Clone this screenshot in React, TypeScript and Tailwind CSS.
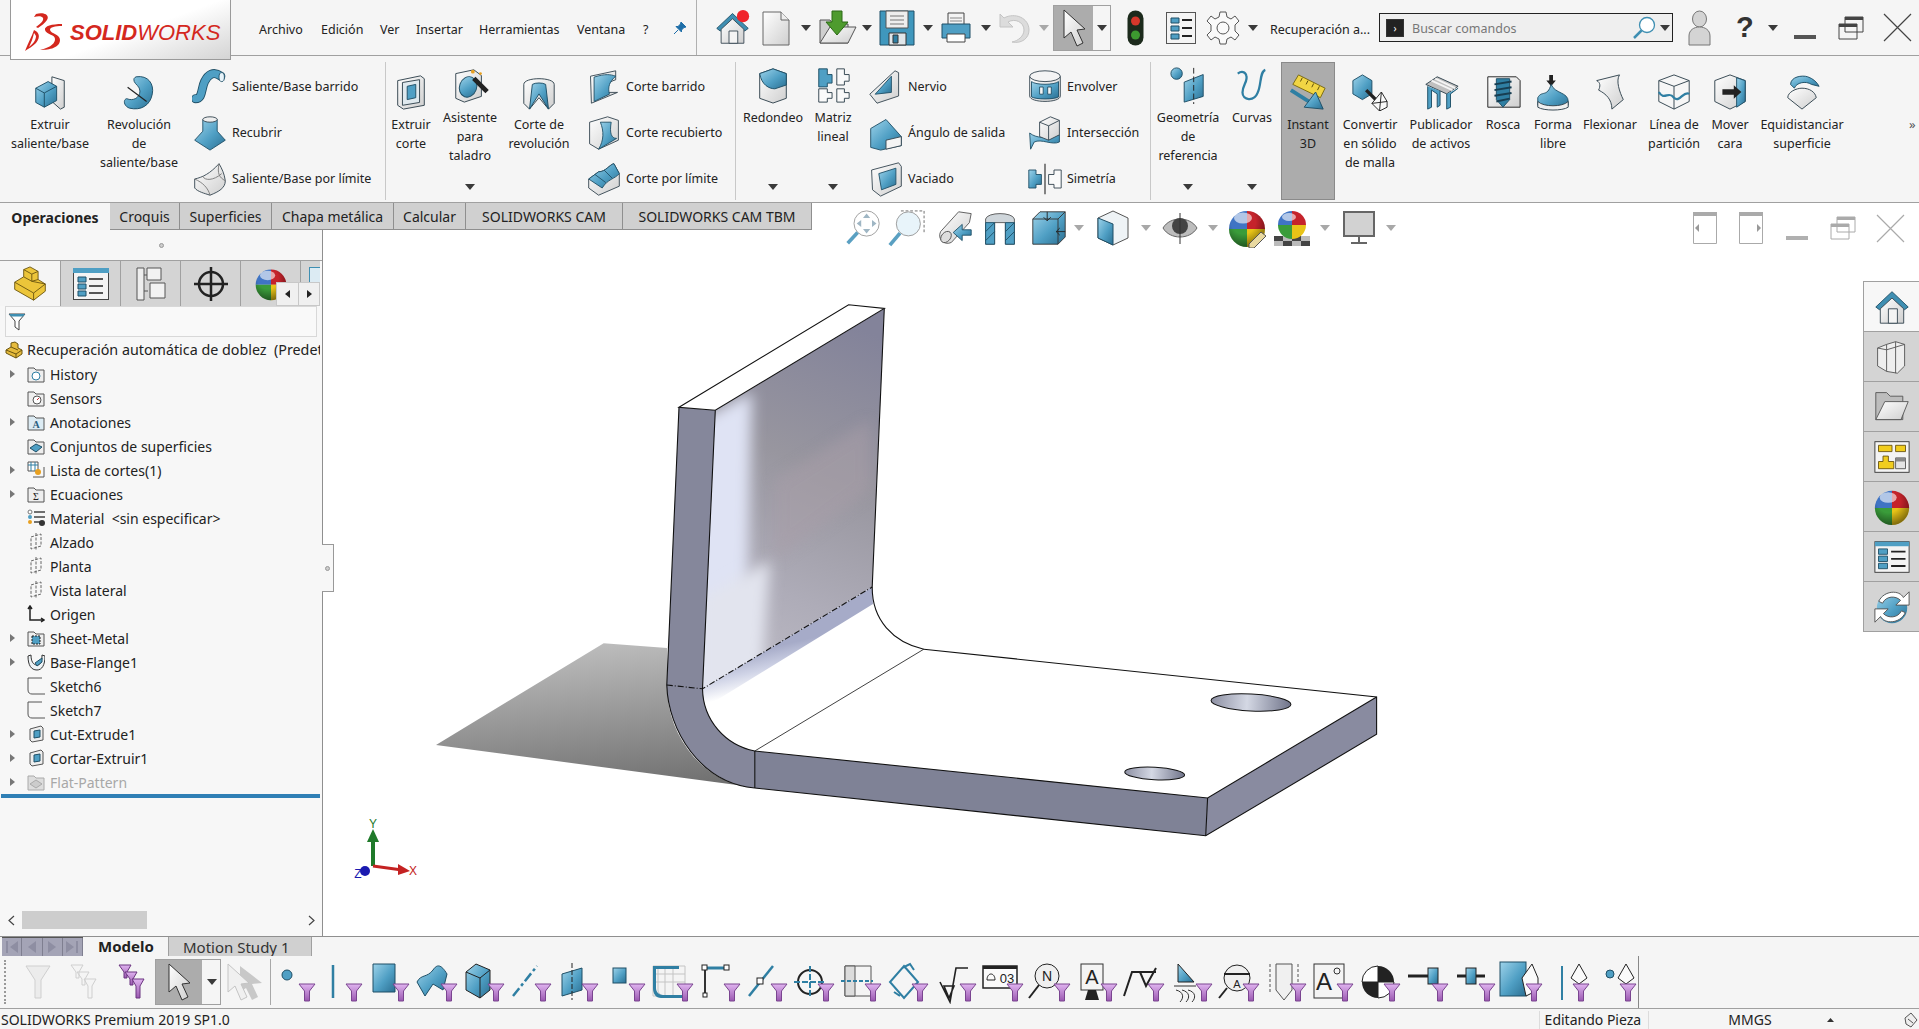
import type { ReactNode } from 'react'

const LINE = '#33444f'
const DARK = '#1f4f66'

function Svg({ s, w, h, vb = '0 0 40 40', children }: { s?: number; w?: number; h?: number; vb?: string; children: ReactNode }) {
  return (
    <svg width={w ?? s} height={h ?? s} viewBox={vb} className="block shrink-0">
      {children}
    </svg>
  )
}

function Defs() {
  return (
    <svg className="absolute h-0 w-0">
      <defs>
        <linearGradient id="b" x1="0" y1="0" x2="1" y2="1">
          <stop offset="0" stopColor="#9ed3ea" />
          <stop offset="0.55" stopColor="#4f9fc4" />
          <stop offset="1" stopColor="#2b6f92" />
        </linearGradient>
        <linearGradient id="w" x1="0" y1="0" x2="1" y2="1">
          <stop offset="0" stopColor="#ffffff" />
          <stop offset="1" stopColor="#cfcfcf" />
        </linearGradient>
        <linearGradient id="p" x1="0" y1="0" x2="0" y2="1">
          <stop offset="0" stopColor="#e0b4f0" />
          <stop offset="1" stopColor="#9a58b0" />
        </linearGradient>
        <radialGradient id="shade" cx="0.4" cy="0.3" r="0.75">
          <stop offset="0.45" stopColor="#000" stopOpacity="0" />
          <stop offset="1" stopColor="#000" stopOpacity="0.5" />
        </radialGradient>
        <linearGradient id="shadow" x1="0.55" y1="0" x2="0.75" y2="1">
          <stop offset="0" stopColor="#bcbcbc" />
          <stop offset="1" stopColor="#707070" />
        </linearGradient>
        <linearGradient id="wallTop" x1="0.6" y1="0" x2="0.4" y2="1">
          <stop offset="0" stopColor="#83839a" />
          <stop offset="0.4" stopColor="#98969f" />
          <stop offset="0.75" stopColor="#aeacb8" />
          <stop offset="1" stopColor="#bcbac4" />
        </linearGradient>
        <linearGradient id="strip" x1="0.55" y1="0.45" x2="0.65" y2="0.75">
          <stop offset="0" stopColor="#a6abc8" />
          <stop offset="0.5" stopColor="#cfd3e6" />
          <stop offset="1" stopColor="#ffffff" />
        </linearGradient>
        <linearGradient id="hole" x1="0" y1="0" x2="1" y2="0">
          <stop offset="0" stopColor="#8d90a3" />
          <stop offset="0.45" stopColor="#d4d8e4" />
          <stop offset="1" stopColor="#70748a" />
        </linearGradient>
        <filter id="soft" x="-30%" y="-30%" width="160%" height="160%">
          <feGaussianBlur stdDeviation="7" />
        </filter>
        <clipPath id="wallClip">
          <path d="M715.300 410.200L884.300 308.500L872.200 587L702.500 688.800Z" />
        </clipPath>
      </defs>
    </svg>
  )
}

function Caret({ grey }: { grey?: boolean }) {
  return (
    <svg width="10" height="6" viewBox="0 0 10 6" className="block shrink-0">
      <path d="M0 0H10L5 6Z" fill={grey ? '#a8a8a8' : '#3a3a3a'} />
    </svg>
  )
}

function Ball({ s, pencil }: { s: number; pencil?: boolean }) {
  return (
    <Svg s={s}>
      <path d="M20 21V3A18 18 0 0 0 2 21Z" fill="#3f74c4" />
      <path d="M20 21V3A18 18 0 0 1 38 21Z" fill="#c5232b" />
      <path d="M20 21H2A18 18 0 0 0 20 39Z" fill="#3a9c3a" />
      <path d="M20 21H38A18 18 0 0 1 20 39Z" fill="#e8c317" />
      <circle cx="20" cy="21" r="18" fill="url(#shade)" />
      <ellipse cx="16" cy="10" rx="9" ry="5.500" fill="#fff" opacity="0.6" />
      {pencil && <path d="M34 24L39 28L27 40L22 40L22 36Z" fill="#e9d9a0" stroke="#555" />}
    </Svg>
  )
}

const ribbonIcons: Record<string, ReactNode> = {
  extrude: (
    <>
      <path d="M22 4L35 8V36L31 38L22 30Z" fill="url(#w)" stroke={LINE} />
      <path d="M5 16L18 9L27 14V29L14 36L5 31Z" fill="url(#b)" stroke={DARK} />
      <path d="M5 16L14 21V36M14 21L27 14" fill="none" stroke={DARK} />
    </>
  ),
  revolve: (
    <>
      <path d="M17 4C30 2 36 12 34 22C32 34 22 40 10 37C4 35 3 28 7 27C14 30 21 26 21 19C21 14 16 12 15 9C14 6 15 5 17 4Z" fill="url(#b)" stroke={DARK} />
      <path d="M8 15L28 30" stroke="#222" strokeWidth="1.3" />
    </>
  ),
  sweep: (
    <>
      <path d="M4 33C12 33 10 22 14 14C18 6 24 2 32 8" fill="none" stroke={DARK} strokeWidth="10" strokeLinecap="round" />
      <path d="M4 33C12 33 10 22 14 14C18 6 24 2 32 8" fill="none" stroke="#4f9fc4" strokeWidth="8" strokeLinecap="round" />
      <ellipse cx="33" cy="9" rx="3" ry="5" fill="#e8f4fa" stroke={DARK} />
    </>
  ),
  loft: (
    <>
      <path d="M12 5H28V18L37 28L20 39L3 28L12 18Z" fill="url(#b)" stroke={DARK} />
      <ellipse cx="20" cy="5" rx="8" ry="3" fill="#eee" stroke={LINE} />
    </>
  ),
  boundary: (
    <>
      <path d="M3 20C12 18 20 14 30 3C33 8 36 14 37 22C37 30 30 34 20 38C14 36 6 34 3 30Z" fill="url(#w)" stroke={LINE} />
      <path d="M3 20C12 24 18 30 20 38M30 3C28 14 30 18 37 22M12 17C14 22 24 22 33 14" fill="none" stroke="#777" />
    </>
  ),
  cutExtrude: (
    <>
      <path d="M6 8L30 3L34 6V34L12 38L6 34Z" fill="url(#w)" stroke={LINE} />
      <path d="M11 10L29 7V31L11 34Z" fill="#dfe9ee" stroke={LINE} />
      <path d="M16 14L25 12V26L16 28Z" fill="#4f9fc4" stroke={DARK} />
    </>
  ),
  hole: (
    <>
      <path d="M5 8L24 4L32 10V32L14 38L5 34Z" fill="url(#w)" stroke={LINE} />
      <ellipse cx="18" cy="22" rx="9" ry="11" fill="url(#b)" stroke={DARK} transform="rotate(20 18 22)" />
      <path d="M24 13L38 27" stroke="#222" strokeWidth="5" />
      <circle cx="23" cy="6" r="2" fill="#e8a020" />
      <circle cx="31" cy="8" r="1.5" fill="#e8a020" />
    </>
  ),
  cutRevolve: (
    <>
      <path d="M4 12C4 4 36 4 36 12V32L30 38L20 26L10 38L4 32Z" fill="url(#w)" stroke={LINE} />
      <path d="M10 38L13 12C16 10 24 10 27 12L30 38L20 22Z" fill="url(#b)" stroke={DARK} />
    </>
  ),
  cutSweep: (
    <>
      <path d="M5 8L33 2V12C24 14 22 22 24 26L35 26L6 38Z" fill="url(#w)" stroke={LINE} />
      <path d="M9 9C22 5 27 6 33 8C26 14 24 20 26 28L9 36Z" fill="url(#b)" stroke={DARK} />
    </>
  ),
  cutLoft: (
    <>
      <path d="M4 8L24 2L36 6V28L14 38L4 32Z" fill="url(#w)" stroke={LINE} />
      <path d="M16 8H28C26 20 28 26 34 26L14 38C20 28 20 18 16 8Z" fill="url(#b)" stroke={DARK} />
    </>
  ),
  cutBoundary: (
    <>
      <path d="M3 20L14 12C22 12 26 4 31 3L37 14V28L14 38L3 30Z" fill="url(#w)" stroke={LINE} />
      <path d="M3 20L14 12C22 12 26 4 31 3L37 14C32 20 24 20 18 30Z" fill="url(#b)" stroke={DARK} />
      <path d="M10 15L22 24M20 10L29 19" stroke={DARK} fill="none" />
    </>
  ),
  fillet: (
    <>
      <path d="M6 8L20 3L34 8V34L20 39L6 34Z" fill="url(#w)" stroke={LINE} />
      <path d="M6 8L20 3L34 8V20L22 24C16 24 8 20 6 8Z" fill="url(#b)" stroke={DARK} />
    </>
  ),
  pattern: (
    <>
      <path d="M5 3H14V9H19V18H14V22H5Z" fill="#4f9fc4" stroke={DARK} />
      <path d="M24 3H32V9H37V16H32V20H24Z" fill="#fafafa" stroke={LINE} />
      <path d="M5 24H14V28H19V34H14V38H5Z" fill="#fafafa" stroke={LINE} />
      <path d="M24 24H32V28H37V34H32V38H24Z" fill="#fafafa" stroke={LINE} />
    </>
  ),
  rib: (
    <>
      <path d="M2 28L30 2L34 4V30L10 38Z" fill="url(#w)" stroke={LINE} />
      <path d="M8 28L26 8V26Z" fill="url(#b)" stroke={DARK} />
    </>
  ),
  draft: (
    <>
      <path d="M3 15L20 5L37 24V34L14 39L3 36Z" fill="url(#b)" stroke={DARK} />
      <path d="M20 28L37 24V34L20 38Z" fill="#f4f4f4" stroke={LINE} />
    </>
  ),
  shell: (
    <>
      <path d="M4 10L34 2L37 6V28L14 39L5 32Z" fill="url(#w)" stroke={LINE} />
      <path d="M12 14L31 8V26L15 32Z" fill="url(#b)" stroke={DARK} />
    </>
  ),
  wrap: (
    <>
      <path d="M3 8V30C3 38 37 38 37 30V8" fill="url(#w)" stroke={LINE} />
      <path d="M5 14C10 18 30 18 35 14V31C30 34 10 34 5 31Z" fill="url(#b)" stroke={DARK} />
      <ellipse cx="20" cy="8" rx="17" ry="6" fill="#f4f4f4" stroke={LINE} />
      <path d="M14 20H18V28H14ZM23 20H27V28H23Z" fill="#f4f4f4" stroke={DARK} />
    </>
  ),
  intersect: (
    <>
      <path d="M3 20C10 26 22 26 36 22V30C28 34 16 26 8 30L4 38Z" fill="url(#b)" stroke={DARK} />
      <path d="M14 8L26 2L36 6V22L24 28L14 24Z" fill="url(#w)" stroke={LINE} />
      <path d="M14 8L24 12V28M24 12L36 6" fill="none" stroke={LINE} />
    </>
  ),
  mirror: (
    <>
      <path d="M2 10H10V15H16V26H10V30H2Z" fill="url(#b)" stroke={DARK} />
      <path d="M38 10H30V15H24V26H30V30H38Z" fill="#fafafa" stroke={LINE} />
      <path d="M20 3V37" stroke="#222" strokeWidth="1.2" />
    </>
  ),
  refGeom: (
    <>
      <circle cx="8" cy="8" r="6" fill="url(#b)" stroke={DARK} />
      <path d="M16 17L36 9V32L16 38Z" fill="url(#b)" stroke={DARK} />
      <path d="M26 2V40" stroke="#222" strokeDasharray="6 3" />
    </>
  ),
  curves: (
    <path d="M34 4C28 6 30 20 26 28C22 38 10 36 10 28C10 20 16 16 14 10C13 6 9 5 5 8" fill="none" stroke="#2f7fa3" strokeWidth="2.4" />
  ),
  instant: (
    <>
      <path d="M10 2L38 16L33 26L4 12Z" fill="#f1d544" stroke="#7a6a10" />
      <path d="M14 5L12 9M20 8L18 12M26 11L24 15M32 14L30 18" stroke="#5a4a08" />
      <path d="M2 18L24 32" stroke="#2f7fa3" strokeWidth="4" />
      <path d="M36 38L16 36L28 20Z" fill="url(#b)" stroke={DARK} />
    </>
  ),
  convert: (
    <>
      <path d="M2 8L12 2L22 8V22L12 28L2 22Z" fill="url(#b)" stroke={DARK} />
      <path d="M16 18L27 29" stroke="#222" strokeWidth="3.5" />
      <path d="M22 32L32 20L38 30V36L30 40Z" fill="#fafafa" stroke="#222" />
      <path d="M22 32L38 30M32 20L30 40" stroke="#222" />
    </>
  ),
  asset: (
    <>
      <path d="M4 12L16 4L38 14L26 22Z" fill="#bfbfbf" stroke={LINE} />
      <path d="M10 8L32 18M14 6L35 16" stroke="#f4f4f4" strokeWidth="2" />
      <path d="M6 14V38L10 36V18L16 22V36L19 34V19" fill="#4f9fc4" stroke={DARK} />
      <path d="M26 22V38L30 36V22L38 16" fill="#4f9fc4" stroke={DARK} />
    </>
  ),
  thread: (
    <>
      <path d="M4 4H34L38 8V36H4Z" fill="url(#w)" stroke="#222" />
      <path d="M13 6H27V28L20 36L13 28Z" fill="#2f7fa3" stroke={DARK} />
      <path d="M11 12L29 9M11 18L29 15M11 24L29 21M13 30L27 27" stroke="#173e52" strokeWidth="2" />
    </>
  ),
  freeform: (
    <>
      <path d="M18 14L13 8H16V2H20V8H23Z" fill="#222" />
      <path d="M4 26C8 18 14 26 18 12C22 22 36 20 36 30V34C30 38 10 38 4 34Z" fill="url(#b)" stroke={DARK} />
      <path d="M4 30C10 36 30 36 36 30V36C30 40 10 40 4 36Z" fill="#f0f0f0" stroke={LINE} />
    </>
  ),
  flex: (
    <path d="M6 8L30 2C26 8 30 20 34 28L22 38C22 28 16 22 8 18C10 14 10 10 6 8Z" fill="url(#w)" stroke={LINE} />
  ),
  split: (
    <>
      <path d="M4 8L20 2L36 8V30L20 38L4 30Z" fill="#f6f6f6" stroke={LINE} />
      <path d="M4 8L20 14L36 8M20 14V38" fill="none" stroke={LINE} />
      <path d="M4 20C10 30 14 18 20 26C26 32 30 18 36 22" fill="none" stroke="#2f7fa3" strokeWidth="2.4" />
    </>
  ),
  moveFace: (
    <>
      <path d="M4 8L20 2L36 8V30L20 38L4 30Z" fill="url(#w)" stroke={LINE} />
      <path d="M27 5L36 8V30L27 36Z" fill="url(#b)" stroke={DARK} />
      <path d="M12 17H24V13L32 20L24 27V23H12Z" fill="#222" />
    </>
  ),
  offset: (
    <>
      <path d="M5 26C5 20 14 16 20 16C28 16 34 20 35 26L20 38Z" fill="url(#w)" stroke={LINE} />
      <path d="M8 12C8 4 20 2 26 4C32 6 36 10 38 14L30 12C24 8 14 10 12 16Z" fill="url(#b)" stroke={DARK} />
    </>
  ),
}

function RibbonIcon({ name, size = 38 }: { name: string; size?: number }) {
  return <Svg s={size}>{ribbonIcons[name]}</Svg>
}

function RibbonButton({ icon, lines, widthClass, tall, caret }: { icon: string; lines: string[]; widthClass: string; tall?: boolean; caret?: boolean }) {
  return (
    <div className={`flex h-full shrink-0 flex-col items-center ${widthClass} ${tall ? 'pt-[10px]' : 'pt-[17px]'}`}>
      <RibbonIcon name={icon} />
      <div className="mt-[4px] text-center text-[12.5px] leading-[19px] whitespace-nowrap">
        {lines.map((l) => (
          <div key={l}>{l}</div>
        ))}
      </div>
      {caret && (
        <div className="mt-auto mb-[12px]">
          <Caret />
        </div>
      )}
    </div>
  )
}

function SmallColumn({ items, widthClass }: { items: [string, string][]; widthClass: string }) {
  return (
    <div className={`flex h-full shrink-0 flex-col pt-[8px] ${widthClass}`}>
      {items.map(([icon, label]) => (
        <div key={label} className="flex h-[46px] items-center gap-[4px] text-[12.5px] whitespace-nowrap">
          <RibbonIcon name={icon} size={36} />
          <span>{label}</span>
        </div>
      ))}
    </div>
  )
}

function RibbonSep() {
  return <div className="mt-[6px] h-[138px] w-px shrink-0 bg-[#c8c8c8]" />
}

function Logo() {
  return (
    <div className="relative z-10 flex h-[60px] w-[221px] shrink-0 items-center border-x border-b border-[#9a9a9a] bg-[linear-gradient(160deg,#ffffff_55%,#d4d4d4)] pt-[7px] pl-[11px]">
      <Svg w={42} h={40} vb="0 0 42 40">
        <path d="M14 1C22 -1 28 2 25 7C23 10 19 13 16 15L14 14C18 11 22 8 21 5C20 3 16 3 12 4Z" fill="#d4281e" />
        <path d="M3 38C6 30 10 23 12 17C17 19 19 24 14 30C11 33 6 36 3 38ZM7 34C11 31 14 27 14 23C13 21 12 20 12 20C11 25 9 30 7 34Z" fill="#d4281e" />
        <path d="M40 11C30 11 22 13 23 17C24 22 34 21 33 27C32 32 26 35 18 37C24 37 38 36 38 27C38 21 29 21 28 17C28 14 33 13 40 13Z" fill="#d4281e" />
      </Svg>
      <span className="ml-[6px] font-['Liberation_Sans',sans-serif] text-[22px] leading-none font-bold text-[#d4281e] italic">SOLID</span>
      <span className="font-['Liberation_Sans',sans-serif] text-[22px] leading-none text-[#d4281e] italic">WORKS</span>
    </div>
  )
}

const menus: [string, string][] = [
  ['Archivo', 'w-[62px] ml-[28px]'],
  ['Edición', 'w-[59px]'],
  ['Ver', 'w-[36px]'],
  ['Insertar', 'w-[63px]'],
  ['Herramientas', 'w-[98px]'],
  ['Ventana', 'w-[66px]'],
  ['?', 'w-[31px]'],
]

function TopBar() {
  return (
    <div className="flex h-[56px] shrink-0 items-center border-b border-[#a0a0a0] bg-[#f5f5f5] pl-[10px]">
      <div className="self-start">
        <Logo />
      </div>
      {menus.map(([m, c]) => (
        <div key={m} className={`mt-[6px] shrink-0 text-[12.5px] ${c}`}>
          {m}
        </div>
      ))}
      <Svg s={12} vb="0 0 12 12">
        <path d="M7 0L12 5L10 5.500L7.500 8L7.500 10L2 4.500L4 4.500L6.500 2Z M4 8L0 12" fill="#1e6ea8" stroke="#1e6ea8" />
      </Svg>
      <div className="ml-[10px] h-[55px] w-px shrink-0 bg-[#b0b0b0]" />
      <div className="ml-[18px]">
        <Svg s={35}>
          <path d="M2 21L20 4L38 21L34 24L20 11L6 24Z" fill="#3f8fb2" stroke={DARK} />
          <path d="M7 22V38H33V22L20 10Z" fill="url(#w)" stroke={LINE} />
          <path d="M16 24H26V38H16Z" fill="#f4f4f4" stroke={LINE} />
          <circle cx="32" cy="7" r="7" fill="#f0242a" />
        </Svg>
      </div>
      <div className="ml-[12px]">
        <Svg w={28} h={36} vb="0 0 28 36">
          <path d="M1 2H19L27 10V35H1Z" fill="url(#w)" stroke="#666" />
          <path d="M19 2V10H27" fill="#eee" stroke="#666" />
        </Svg>
      </div>
      <div className="ml-[11px]">
        <Caret />
      </div>
      <div className="ml-[7px]">
        <Svg w={39} h={36} vb="0 0 39 36">
          <path d="M2 10H12L15 14H30V33H2Z" fill="#cfcfcf" stroke="#555" />
          <path d="M2 33L12 17H38L30 33Z" fill="url(#w)" stroke="#555" />
          <path d="M14 1H24V12H30L19 25L8 12H14Z" fill="#4e9b2e" stroke="#2c6a16" />
        </Svg>
      </div>
      <div className="ml-[5px]">
        <Caret />
      </div>
      <div className="ml-[7px]">
        <Svg s={36} vb="0 0 36 36">
          <path d="M1 1H35V35H1Z" fill="#3f97bd" stroke={DARK} />
          <path d="M7 1H29V18H7Z" fill="#eee" stroke="#555" />
          <path d="M11 6H25M11 10H25M11 14H25" stroke="#777" />
          <path d="M10 23H27V35H10Z" fill="#dfe6ea" stroke="#333" />
          <path d="M14 25H19V33H14Z" fill="#2f7fa3" stroke="#333" />
        </Svg>
      </div>
      <div className="ml-[8px]">
        <Caret />
      </div>
      <div className="ml-[8px]">
        <Svg w={30} h={34} vb="0 0 30 34">
          <path d="M7 2H23V14H7Z" fill="#f4f4f4" stroke="#444" />
          <path d="M1 13H29V27H1Z" fill="#4f9fc4" stroke={DARK} />
          <path d="M6 23H24V31H6Z" fill="#fff" stroke="#444" />
          <path d="M9 7H21M9 10H21" stroke="#888" />
        </Svg>
      </div>
      <div className="ml-[10px]">
        <Caret />
      </div>
      <div className="ml-[6px]">
        <Svg w={33} h={32} vb="0 0 33 32">
          <path d="M3 2V15H16L11 10C18 6 27 10 27 18C27 24 21 29 15 30C25 32 32 26 32 18C32 6 18 0 7 6Z" fill="#dcdcdc" stroke="#c4c4c4" />
        </Svg>
      </div>
      <div className="ml-[9px]">
        <Caret grey />
      </div>
      <div className="ml-[4px] flex h-[46px] w-[58px] shrink-0 items-center border border-[#a0a0a0]">
        <div className="flex h-full w-[39px] items-center justify-center bg-[#acacac]">
          <Svg w={24} h={40} vb="0 0 24 40">
            <path d="M2 2V30L9 24L15 38L21 35L15 22L23 21Z" fill="url(#w)" stroke="#333" />
          </Svg>
        </div>
        <div className="ml-[4px]">
          <Caret />
        </div>
      </div>
      <div className="ml-[16px]">
        <Svg w={17} h={36} vb="0 0 17 36">
          <rect x="0.500" y="0.500" width="16" height="35" rx="8" fill="#1c2a1c" />
          <circle cx="8.500" cy="11" r="4.500" fill="#d5372b" />
          <circle cx="8.500" cy="25" r="4.500" fill="#3d9a30" />
        </Svg>
      </div>
      <div className="ml-[22px]">
        <Svg w={30} h={32} vb="0 0 30 32">
          <rect x="0.500" y="0.500" width="29" height="31" fill="#f4f4f4" stroke="#555" />
          <path d="M5 6H13V11H5ZM5 14H13V19H5ZM5 22H13V27H5Z" fill="#4f9fc4" stroke={DARK} />
          <path d="M16 8H26M16 16H26M16 24H26" stroke="#222" strokeWidth="2" />
        </Svg>
      </div>
      <div className="ml-[10px]">
        <Svg s={34} vb="0 0 34 34">
          <path d="M14 1H20L21 6L25 8L29 5L33 10L29 14V20L33 24L29 29L25 26L21 28L20 33H14L13 28L9 26L5 29L1 24L5 20V14L1 10L5 5L9 8L13 6Z" fill="#fafafa" stroke="#555" />
          <circle cx="17" cy="17" r="6" fill="#fafafa" stroke="#555" />
        </Svg>
      </div>
      <div className="ml-[8px]">
        <Caret />
      </div>
      <div className="mt-[6px] ml-[12px] w-[109px] shrink-0 text-[12.5px] whitespace-nowrap">Recuperación a...</div>
      <div className="flex h-[29px] w-[294px] shrink-0 items-center border border-[#222] bg-[#efefef] pl-[6px]">
        <div className="flex h-[18px] w-[18px] items-center justify-center border border-[#333] bg-[#222] text-[10px] leading-none text-white">›</div>
        <span className="mt-[3px] ml-[8px] w-[220px] text-[12.5px] text-[#777]">Buscar comandos</span>
        <Svg s={24} vb="0 0 24 24">
          <circle cx="15" cy="9" r="7.500" fill="#fff" stroke="#3f8fb2" strokeWidth="1.3" />
          <path d="M9.500 14.500L2 22" stroke="#3f8fb2" strokeWidth="2.500" />
        </Svg>
        <div className="ml-[4px]">
          <Caret />
        </div>
      </div>
      <div className="ml-[15px]">
        <Svg w={23} h={36} vb="0 0 23 36">
          <ellipse cx="11.500" cy="9" rx="7" ry="8" fill="#d4d4d4" stroke="#777" />
          <path d="M1 35V26C1 20 6 17 11.500 17C17 17 22 20 22 26V35Z" fill="#d4d4d4" stroke="#777" />
        </Svg>
      </div>
      <div className="ml-[25px] w-[17px] shrink-0 font-['Liberation_Sans',sans-serif] text-[29px] leading-none font-bold text-[#333]">?</div>
      <div className="ml-[15px]">
        <Caret />
      </div>
      <div className="mt-[18px] ml-[16px] h-[4px] w-[22px] shrink-0 bg-[#555]" />
      <div className="ml-[22px]">
        <Svg w={26} h={24} vb="0 0 26 24">
          <path d="M7 1H25V16H7Z M1 8H19V23H1Z" fill="none" stroke="#444" />
          <path d="M7 1H25V4H7Z M1 8H19V11H1Z" fill="#444" />
        </Svg>
      </div>
      <div className="ml-[19px]">
        <Svg s={29} vb="0 0 29 29">
          <path d="M1 1L28 28M28 1L1 28" stroke="#444" strokeWidth="1.200" />
        </Svg>
      </div>
    </div>
  )
}

function Ribbon() {
  return (
    <div className="flex h-[146px] shrink-0 bg-[#f5f5f5]">
      <RibbonButton icon="extrude" lines={['Extruir', 'saliente/base']} widthClass="w-[84px] ml-[8px]" />
      <RibbonButton icon="revolve" lines={['Revolución', 'de', 'saliente/base']} widthClass="w-[84px] ml-[5px]" />
      <SmallColumn
        widthClass="w-[193px] ml-[11px]"
        items={[
          ['sweep', 'Saliente/Base barrido'],
          ['loft', 'Recubrir'],
          ['boundary', 'Saliente/Base por límite'],
        ]}
      />
      <RibbonSep />
      <RibbonButton icon="cutExtrude" lines={['Extruir', 'corte']} widthClass="w-[50px]" />
      <RibbonButton icon="hole" lines={['Asistente', 'para', 'taladro']} widthClass="w-[68px]" tall caret />
      <RibbonButton icon="cutRevolve" lines={['Corte de', 'revolución']} widthClass="w-[70px]" />
      <SmallColumn
        widthClass="w-[149px] ml-[12px]"
        items={[
          ['cutSweep', 'Corte barrido'],
          ['cutLoft', 'Corte recubierto'],
          ['cutBoundary', 'Corte por límite'],
        ]}
      />
      <RibbonSep />
      <RibbonButton icon="fillet" lines={['Redondeo']} widthClass="w-[74px]" tall caret />
      <RibbonButton icon="pattern" lines={['Matriz', 'lineal']} widthClass="w-[46px]" tall caret />
      <SmallColumn
        widthClass="w-[159px] ml-[12px]"
        items={[
          ['rib', 'Nervio'],
          ['draft', 'Ángulo de salida'],
          ['shell', 'Vaciado'],
        ]}
      />
      <SmallColumn
        widthClass="w-[123px]"
        items={[
          ['wrap', 'Envolver'],
          ['intersect', 'Intersección'],
          ['mirror', 'Simetría'],
        ]}
      />
      <RibbonSep />
      <RibbonButton icon="refGeom" lines={['Geometría', 'de', 'referencia']} widthClass="w-[74px]" tall caret />
      <RibbonButton icon="curves" lines={['Curvas']} widthClass="w-[54px]" tall caret />
      <div className="mt-[6px] ml-[2px] h-[138px] w-[54px] shrink-0 border border-[#8a8a8a] bg-[#acacac] pt-[10px]">
        <div className="flex flex-col items-center">
          <RibbonIcon name="instant" />
          <div className="mt-[4px] text-center text-[12.5px] leading-[19px]">
            <div>Instant</div>
            <div>3D</div>
          </div>
        </div>
      </div>
      <RibbonButton icon="convert" lines={['Convertir', 'en sólido', 'de malla']} widthClass="w-[70px]" />
      <RibbonButton icon="asset" lines={['Publicador', 'de activos']} widthClass="w-[72px]" />
      <RibbonButton icon="thread" lines={['Rosca']} widthClass="w-[52px]" />
      <RibbonButton icon="freeform" lines={['Forma', 'libre']} widthClass="w-[48px]" />
      <RibbonButton icon="flex" lines={['Flexionar']} widthClass="w-[66px]" />
      <RibbonButton icon="split" lines={['Línea de', 'partición']} widthClass="w-[62px]" />
      <RibbonButton icon="moveFace" lines={['Mover', 'cara']} widthClass="w-[50px]" />
      <RibbonButton icon="offset" lines={['Equidistanciar', 'superficie']} widthClass="w-[94px]" />
      <div className="mt-[62px] ml-[60px] text-[13px] leading-none text-[#555]">»</div>
    </div>
  )
}

const tabs: [string, string][] = [
  ['Croquis', 'w-[70px]'],
  ['Superficies', 'w-[92px]'],
  ['Chapa metálica', 'w-[122px]'],
  ['Calcular', 'w-[72px]'],
  ['SOLIDWORKS CAM', 'w-[157px]'],
  ['SOLIDWORKS CAM TBM', 'w-[189px]'],
]

function CommandTabs() {
  return (
    <div className="flex h-[28px] shrink-0 border-t border-[#a0a0a0] bg-white whitespace-nowrap">
      <div className="flex w-[110px] items-center justify-center bg-[#f5f5f5] pt-px text-[14px] font-bold">Operaciones</div>
      {tabs.map(([t, c]) => (
        <div key={t} className={`flex items-center justify-center border-r border-b border-[#8f8f8f] bg-[#d0d0d0] pt-px text-[14px] first:border-l ${c}`}>
          {t}
        </div>
      ))}
    </div>
  )
}

function CanvasToolbar() {
  return (
    <div className="absolute top-[8px] left-[845px] flex h-[36px] items-center">
      <Svg s={36}>
        <circle cx="24" cy="15" r="14" fill="#fff" stroke="#999" />
        <path d="M24 4L28 9H20ZM24 26L28 21H20ZM13 15L18 11V19ZM35 15L30 11V19Z" fill="#9fb6c4" />
        <path d="M14 25L3 37" stroke="#5aa0c2" strokeWidth="4" />
      </Svg>
      <div className="ml-[7px]">
        <Svg s={37}>
          <path d="M14 1H39V26" fill="none" stroke="#666" strokeDasharray="3 2" />
          <circle cx="22" cy="15" r="13" fill="#e8f4fa" stroke="#999" />
          <path d="M13 25L2 38" stroke="#5aa0c2" strokeWidth="4" />
        </Svg>
      </div>
      <div className="ml-[12px]">
        <Svg s={36}>
          <path d="M24 2L38 4L36 14L16 36C8 40 0 32 4 24Z" fill="url(#w)" stroke="#555" />
          <ellipse cx="10" cy="30" rx="5" ry="7" fill="#ddd" stroke="#555" transform="rotate(40 10 30)" />
          <path d="M38 22H28V16L18 25L28 34V28H38Z" fill="url(#b)" stroke={DARK} />
        </Svg>
      </div>
      <div className="ml-[9px]">
        <Svg s={36}>
          <path d="M4 10C6 2 34 2 36 10V38H26V14H14V38H4Z" fill="#cfd6db" stroke="#555" />
          <path d="M4 14H14V38H4ZM26 14H36V38H26Z" fill="#4f9fc4" stroke={DARK} />
          <path d="M4 24L14 14M4 34L14 24M26 24L36 14M26 34L36 24" stroke="#1f4f66" />
        </Svg>
      </div>
      <div className="ml-[13px]">
        <Svg s={36}>
          <path d="M2 10L10 2H38V30L30 38H2Z" fill="url(#b)" stroke="#333" />
          <path d="M2 10H30V38M30 10L38 2" fill="none" stroke="#333" />
          <path d="M18 2V12M14 8L18 12L22 8M38 24H28M32 20L28 24L32 28" fill="none" stroke="#222" />
        </Svg>
      </div>
      <div className="ml-[7px]">
        <Caret grey />
      </div>
      <div className="ml-[13px]">
        <Svg w={32} h={36} vb="0 0 32 36">
          <path d="M1 8L16 1L31 8V28L16 35L1 28Z" fill="#eef3f6" stroke="#555" />
          <path d="M1 8L16 14V35L1 28Z" fill="url(#b)" stroke={DARK} />
        </Svg>
      </div>
      <div className="ml-[12px]">
        <Caret grey />
      </div>
      <div className="ml-[11px]">
        <Svg w={36} h={36} vb="0 0 36 36">
          <path d="M1 18C8 6 28 6 35 18C28 30 8 30 1 18Z" fill="#bdbdbd" stroke="#666" />
          <circle cx="18" cy="16" r="8" fill="#444" />
          <path d="M18 3V34" stroke="#333" />
        </Svg>
      </div>
      <div className="ml-[10px]">
        <Caret grey />
      </div>
      <div className="ml-[9px]">
        <Ball s={40} pencil />
      </div>
      <div className="ml-[7px]">
        <Svg s={36} vb="0 0 36 36">
          <path d="M0 26H36V36H0Z" fill="#bbb" />
          <path d="M0 26H9V31H0ZM18 26H27V31H18ZM9 31H18V36H9ZM27 31H36V36H27Z" fill="#444" />
          <path d="M18 15V1A14 14 0 0 0 4 15Z" fill="#3f74c4" />
          <path d="M18 15V1A14 14 0 0 1 32 15Z" fill="#c5232b" />
          <path d="M18 15H4A14 14 0 0 0 18 29Z" fill="#3a9c3a" />
          <path d="M18 15H32A14 14 0 0 1 18 29Z" fill="#e8c317" />
          <ellipse cx="15" cy="7" rx="7" ry="4" fill="#fff" opacity="0.6" />
        </Svg>
      </div>
      <div className="ml-[10px]">
        <Caret grey />
      </div>
      <div className="ml-[13px]">
        <Svg w={32} h={34} vb="0 0 32 34">
          <path d="M1 1H31V25H1Z" fill="#d2d2d2" stroke="#666" strokeWidth="2" />
          <path d="M15 26H17V31H15ZM8 31H24V33H8Z" fill="#666" />
        </Svg>
      </div>
      <div className="ml-[11px]">
        <Caret grey />
      </div>
      <div className="ml-[297px]">
        <Svg w={24} h={32} vb="0 0 24 32">
          <path d="M0.500 0.500H23.500V31.500H0.500Z" fill="#fff" stroke="#aaa" />
          <path d="M0 0H24V4H0Z" fill="#aaa" />
          <path d="M6 12V20L2 16Z" fill="#999" />
        </Svg>
      </div>
      <div className="ml-[22px]">
        <Svg w={24} h={32} vb="0 0 24 32">
          <path d="M0.500 0.500H23.500V31.500H0.500Z" fill="#fff" stroke="#aaa" />
          <path d="M0 0H24V4H0Z" fill="#aaa" />
          <path d="M18 12V20L22 16Z" fill="#999" />
        </Svg>
      </div>
      <div className="mt-[20px] ml-[23px] h-[4px] w-[22px] shrink-0 bg-[#b0b0b0]" />
      <div className="ml-[22px]">
        <Svg w={26} h={24} vb="0 0 26 24">
          <path d="M7 1H25V16H7Z M1 8H19V23H1Z" fill="none" stroke="#aaa" />
          <path d="M7 1H25V4H7Z M1 8H19V11H1Z" fill="#aaa" />
        </Svg>
      </div>
      <div className="ml-[20px]">
        <Svg s={29} vb="0 0 29 29">
          <path d="M1 1L28 28M28 1L1 28" stroke="#aaa" strokeWidth="1.200" />
        </Svg>
      </div>
    </div>
  )
}

const folder = 'M1 3H7L9 5H17V17H1Z'
const treeIcons: Record<string, ReactNode> = {
  root: (
    <>
      <path d="M1 9L6 6V2L10 1L13 3V7L17 9V13L11 17L1 12Z" fill="#e6bb3c" stroke="#6a5510" />
      <path d="M1 9L11 13V17M11 13L17 9M6 6L13 9" fill="none" stroke="#6a5510" />
    </>
  ),
  history: (
    <>
      <path d={folder} fill="#eee" stroke="#555" />
      <circle cx="9" cy="11" r="4" fill="#fff" stroke="#2f7fa3" />
    </>
  ),
  sensors: (
    <>
      <path d={folder} fill="#eee" stroke="#555" />
      <circle cx="10" cy="11" r="4" fill="#fff" stroke="#555" />
      <path d="M10 11L12 9" stroke="#c5232b" />
    </>
  ),
  notes: (
    <>
      <path d={folder} fill="#dcebf3" stroke="#555" />
      <text x="9" y="15" textAnchor="middle" fontFamily="Liberation Serif" fontWeight="700" fontSize="10" fill="#2b5f7f">A</text>
    </>
  ),
  surfaces: (
    <>
      <path d={folder} fill="#eee" stroke="#555" />
      <path d="M3 11L9 7L15 10L9 15Z" fill="#4f9fc4" stroke={DARK} />
    </>
  ),
  cutlist: (
    <>
      <path d="M1 1H11V10H1Z" fill="#fff" stroke="#555" />
      <path d="M1 4H11M4 1V10M8 1V10" stroke="#2f7fa3" />
      <path d="M6 16H17V6" fill="none" stroke="#555" />
      <circle cx="11" cy="11" r="3" fill="#e8a020" />
    </>
  ),
  equations: (
    <>
      <path d={folder} fill="#eee" stroke="#555" />
      <text x="9" y="15" textAnchor="middle" fontFamily="Liberation Serif" fontSize="10" fill="#222">Σ</text>
    </>
  ),
  material: (
    <>
      <circle cx="3" cy="3" r="2" fill="#fff" stroke="#777" />
      <circle cx="3" cy="8" r="2" fill="#4f9fc4" />
      <circle cx="3" cy="13" r="2" fill="#e8a020" />
      <path d="M7 3H18M7 8H18M7 13H13" stroke="#444" strokeWidth="1.500" />
      <circle cx="15" cy="14" r="3" fill="#333" />
    </>
  ),
  plane: <path d="M4 4L14 1V13L4 16ZM9 0V18" fill="none" stroke="#666" strokeDasharray="3 1.500" />,
  origin: <path d="M3 1V15H17M1 4L3 1L5 4M14 13L17 15L14 17" fill="none" stroke="#222" strokeWidth="1.500" />,
  sheet: (
    <>
      <path d={folder} fill="#eee" stroke="#555" />
      <rect x="5" y="7" width="8" height="8" fill="#4f9fc4" stroke="#222" strokeDasharray="2 1" />
    </>
  ),
  flange: (
    <>
      <path d="M1 3C1 12 4 17 10 17C15 17 18 12 18 3L15 2C15 8 14 12 10 12C6 12 4 8 4 2Z" fill="#eef3f6" stroke="#333" />
      <path d="M8 10L15 5V9L10 13Z" fill="#4f9fc4" stroke={DARK} />
    </>
  ),
  sketch: <path d="M1 1V13C1 16 3 17 5 17H18M1 1H15" fill="none" stroke="#555" />,
  cut: (
    <>
      <path d="M3 4L14 1L16 3V15L5 17L3 15Z" fill="#eee" stroke="#555" />
      <path d="M7 6L13 5V12L7 13Z" fill="#4f9fc4" stroke={DARK} />
    </>
  ),
  flat: (
    <>
      <path d={folder} fill="#ddd" stroke="#aaa" />
      <path d="M3 11L9 7L15 11L9 15Z" fill="#ccc" stroke="#aaa" />
    </>
  ),
}

const treeRows: [string, string, boolean, boolean?][] = [
  ['History', 'history', true],
  ['Sensors', 'sensors', false],
  ['Anotaciones', 'notes', true],
  ['Conjuntos de superficies', 'surfaces', false],
  ['Lista de cortes(1)', 'cutlist', true],
  ['Ecuaciones', 'equations', true],
  ['Material\u00a0 <sin especificar>', 'material', false],
  ['Alzado', 'plane', false],
  ['Planta', 'plane', false],
  ['Vista lateral', 'plane', false],
  ['Origen', 'origin', false],
  ['Sheet-Metal', 'sheet', true],
  ['Base-Flange1', 'flange', true],
  ['Sketch6', 'sketch', false],
  ['Sketch7', 'sketch', false],
  ['Cut-Extrude1', 'cut', true],
  ['Cortar-Extruir1', 'cut', true],
  ['Flat-Pattern', 'flat', true, true],
]

function PanelTabs() {
  return (
    <div className="relative flex h-[46px] shrink-0 border-t border-[#a0a0a0] pr-[2px]">
      <div className="flex w-[61px] items-center justify-center border-r border-[#a0a0a0] bg-[#f5f5f5]">
        <Svg s={36}>
          <path d="M3 18L13 12V4L20 1L29 6V15L37 20V28L24 38L3 26Z" fill="#ecc53a" stroke="#6a5510" />
          <path d="M13 4L22 9V17L13 12M22 9L29 6M22 17L29 15M3 18L24 30V38M24 30L37 20M22 17L37 20" fill="none" stroke="#6a5510" />
        </Svg>
      </div>
      <div className="flex w-[60px] items-center justify-center border-r border-[#a0a0a0] bg-[#d4d4d4]">
        <Svg w={36} h={32} vb="0 0 36 32">
          <rect x="0.500" y="0.500" width="35" height="31" fill="#f4f4f4" stroke="#444" />
          <path d="M0 0H36V5H0Z" fill="#4f9fc4" />
          <path d="M5 9H13V14H5ZM5 16H13V21H5ZM5 23H13V28H5Z" fill="#4f9fc4" stroke={DARK} />
          <path d="M16 11H30M16 18H30M16 25H30" stroke="#222" strokeWidth="1.500" />
        </Svg>
      </div>
      <div className="flex w-[60px] items-center justify-center border-r border-[#a0a0a0] bg-[#d4d4d4]">
        <Svg w={30} h={34} vb="0 0 30 34">
          <path d="M1 1H8V33H1ZM8 8H12M8 24H12" fill="#eee" stroke="#555" />
          <path d="M11 1H25V13H11ZM14 16H29V31H14Z" fill="#f2f2f2" stroke="#555" />
        </Svg>
      </div>
      <div className="flex w-[60px] items-center justify-center border-r border-[#a0a0a0] bg-[#d4d4d4]">
        <Svg s={36} vb="0 0 36 36">
          <circle cx="18" cy="18" r="12" fill="none" stroke="#222" strokeWidth="2.500" />
          <path d="M18 1V35M1 18H35" stroke="#222" strokeWidth="2.500" />
        </Svg>
      </div>
      <div className="flex w-[60px] items-center justify-center overflow-hidden border-r border-[#a0a0a0] bg-[#d4d4d4]">
        <Ball s={34} />
      </div>
      <div className="flex-1 overflow-hidden bg-[#d4d4d4] pt-[6px] pl-[8px]">
        <div className="h-[18px] w-[14px] border border-[#3f8fb2] bg-[#dcebf3]" />
      </div>
      <div className="absolute right-[2px] bottom-0 flex h-[24px] w-[44px] border border-[#c8c8c8] bg-[#f0f0f0]">
        <div className="flex w-[22px] items-center justify-center border-r border-[#c8c8c8]">
          <svg width="5" height="8" viewBox="0 0 5 8"><path d="M5 0V8L0 4Z" fill="#222" /></svg>
        </div>
        <div className="flex flex-1 items-center justify-center">
          <svg width="5" height="8" viewBox="0 0 5 8"><path d="M0 0V8L5 4Z" fill="#222" /></svg>
        </div>
      </div>
    </div>
  )
}

function FeatureTree() {
  return (
    <div className="relative flex w-[323px] shrink-0 flex-col border-r border-[#8f8f8f] bg-[#f7f7f7] text-[14px]">
      <div className="flex h-[30px] shrink-0 items-center justify-center">
        <div className="h-[5px] w-[5px] rounded-full border border-[#999] bg-[#ccc]" />
      </div>
      <PanelTabs />
      <div className="mx-[5px] flex h-[31px] shrink-0 items-center border border-[#d8d8d8] bg-[#f9f9f9] pl-[2px]">
        <Svg w={18} h={18} vb="0 0 18 18">
          <path d="M1 1H17L11 8V17L7 14V8Z" fill="#fff" stroke="#444" />
          <path d="M1 1H17L15 3.500H3Z" fill="#3f8fb2" />
        </Svg>
      </div>
      <div className="mt-[1px] mr-[2px] flex h-[24px] shrink-0 items-center overflow-hidden pl-[5px] text-[14.3px] whitespace-nowrap text-[#222]">
        <Svg s={18} vb="0 0 18 18">{treeIcons.root}</Svg>
        <span className="ml-[4px]">Recuperación automática de doblez&nbsp; (Predeterminado)</span>
      </div>
      {treeRows.map(([label, icon, expand, disabled]) => (
        <div key={label} className={`flex h-[24px] shrink-0 items-center ${disabled ? 'text-[#a8a8a8]' : 'text-[#222]'}`}>
          <div className="flex w-[27px] shrink-0 justify-start pl-[10px]">
            {expand && (
              <svg width="5" height="8" viewBox="0 0 5 8"><path d="M0 0V8L5 4Z" fill="#777" /></svg>
            )}
          </div>
          <Svg s={18} vb="0 0 18 18">{treeIcons[icon]}</Svg>
          <span className="ml-[5px]">{label}</span>
        </div>
      ))}
      <div className="ml-px h-[4px] w-[319px] shrink-0 bg-[#2f7fb5]" />
      <div className="mt-auto mb-[7px] flex h-[18px] shrink-0 items-center">
        <div className="flex w-[22px] justify-center">
          <svg width="7" height="11" viewBox="0 0 7 11"><path d="M6 1L1 5.500L6 10" fill="none" stroke="#444" strokeWidth="1.200" /></svg>
        </div>
        <div className="h-full w-[125px] bg-[#cdcdcd]" />
        <div className="ml-auto flex w-[22px] justify-center">
          <svg width="7" height="11" viewBox="0 0 7 11"><path d="M1 1L6 5.500L1 10" fill="none" stroke="#444" strokeWidth="1.200" /></svg>
        </div>
      </div>
      <div className="absolute top-[314px] -right-[12px] z-10 flex h-[48px] w-[12px] items-center justify-center border-y border-r border-[#999] bg-[#f7f7f7]">
        <div className="h-[5px] w-[5px] rounded-full border border-[#999] bg-[#ccc]" />
      </div>
    </div>
  )
}

function PartView() {
  return (
    <svg width="1596" height="705" viewBox="323 230 1596 705" className="absolute inset-0">
      <path d="M603.700 643.300L667 648L668 700C672 735 700 782 752 787L436 745Z" fill="url(#shadow)" />

      <path d="M715.300 410.200L884.300 308.500L872.200 587L702.500 688.800Z" fill="url(#wallTop)" />
      <g clipPath="url(#wallClip)">
        <path d="M700 420L752 392L745 690L690 700Z" fill="#dfe3f4" filter="url(#soft)" />
        <path d="M700 600L770 560L760 700L700 710Z" fill="#e2e4ee" filter="url(#soft)" />
        <path d="M775 480L870 420V490L775 560Z" fill="#a89ea8" opacity="0.55" filter="url(#soft)" />
      </g>

      <path d="M702.500 688.800L872.200 587C872 620 893 642 923.800 649.200L754.800 751C725 745 703 720 702.500 688.800Z" fill="#fff" />
      <path d="M702.500 688.800L872.200 587L873 604L704 708Z" fill="url(#strip)" />

      <path d="M679 407.300L715.300 410.200L702.500 688.800C703 720 725 745 754.800 751V788C700 783 668 730 666.800 685Z" fill="#85879b" />
      <path d="M754.800 751L1207.600 798L1205.700 835.700L754.800 788Z" fill="#7f8296" />
      <path d="M1207.600 798L1376.600 697V734.300L1205.700 835.700Z" fill="#898ba0" />
      <path d="M848.600 304.800L884.300 308.500L715.300 410.200L679 407.300Z" fill="#fff" />

      <ellipse cx="1251" cy="702.500" rx="40" ry="8.500" fill="url(#hole)" stroke="#111" strokeWidth="1" transform="rotate(3 1251 702.500)" />
      <ellipse cx="1154.700" cy="773.500" rx="30" ry="6.300" fill="url(#hole)" stroke="#111" strokeWidth="1" transform="rotate(3 1154.700 773.500)" />

      <g fill="none" stroke="#111" strokeWidth="1.100">
        <path d="M679 407.300L848.600 304.800L884.300 308.500L715.300 410.200Z" />
        <path d="M679 407.300L666.800 685C668 730 700 783 754.800 788L1205.700 835.700L1376.600 734.300V697L923.800 649.200" />
        <path d="M715.300 410.200L702.500 688.800C703 720 725 745 754.800 751L1207.600 798L1376.600 697" />
        <path d="M884.300 308.500L872.200 587C872 620 893 642 923.800 649.200" />
        <path d="M1207.600 798L1205.700 835.700M754.800 751V788" />
        <path d="M754.800 751L923.800 649.200" strokeWidth="0.800" />
        <path d="M666.800 685L702.500 688.800L872.200 587" strokeDasharray="6 2 1 2" />
      </g>

      <path d="M373 866V838" stroke="#1f7a2a" strokeWidth="4" />
      <path d="M367 842L373 829L379 842Z" fill="#1f7a2a" />
      <path d="M373 866L402 870" stroke="#c42222" strokeWidth="3" />
      <path d="M398 864L410 871L398 875Z" fill="#c42222" />
      <circle cx="365" cy="871" r="5" fill="#1a1ab0" />
      <text x="373" y="828" textAnchor="middle" fontFamily="Liberation Sans" fontSize="12" fill="#1f7a2a">Y</text>
      <text x="413" y="875" textAnchor="middle" fontFamily="Liberation Sans" fontSize="12" fill="#c42222">X</text>
      <text x="358" y="878" textAnchor="middle" fontFamily="Liberation Sans" fontSize="12" fill="#1a1ab0">Z</text>
    </svg>
  )
}

function TaskPane() {
  const cls = 'flex h-[50px] items-center justify-center border-b border-[#a0a0a0] bg-[#d4d4d4]'
  return (
    <div className="absolute top-[51px] right-0 w-[56px] border-t border-l border-[#a0a0a0]">
      <div className="flex h-[50px] items-center justify-center border-b border-[#a0a0a0] bg-[#f7f7f7]">
        <Svg s={36}>
          <path d="M2 20L20 3L38 20L34 23L20 11L6 23Z" fill="#3f8fb2" stroke={DARK} />
          <path d="M7 22V38H33V22L20 10Z" fill="url(#w)" stroke={LINE} />
          <path d="M16 22H26V38H16Z" fill="#f4f4f4" stroke={LINE} />
        </Svg>
      </div>
      <div className={cls}>
        <Svg s={36}>
          <path d="M4 10L14 6L24 3L34 6V30L26 38L14 36L4 30Z" fill="#eee" stroke="#555" />
          <path d="M14 6V36M24 3V38M14 12L4 10M24 9L14 12M34 6L24 9" stroke="#555" fill="none" />
        </Svg>
      </div>
      <div className={cls}>
        <Svg s={36}>
          <path d="M2 4H14L18 8H32V34H2Z" fill="#bdbdbd" stroke="#555" />
          <path d="M2 34L12 14H38L30 34Z" fill="url(#w)" stroke="#555" />
        </Svg>
      </div>
      <div className={cls}>
        <Svg s={36}>
          <rect x="1" y="3" width="38" height="34" fill="#f4f4f4" stroke="#333" />
          <path d="M5 7H20V14H5ZM24 7H35V14H24ZM10 19H16V25H22V33H5V25H10Z" fill="#f1cd1e" stroke="#6a5510" />
          <path d="M24 21H35V33H24Z" fill="#e4e4e4" stroke="#555" />
          <path d="M24 21H35V25H24Z" fill="#888" />
        </Svg>
      </div>
      <div className={cls}>
        <Ball s={38} />
      </div>
      <div className={cls}>
        <Svg s={36}>
          <rect x="1" y="3" width="38" height="34" fill="#f4f4f4" stroke="#333" />
          <path d="M1 3H39V8H1Z" fill="#4f9fc4" />
          <path d="M5 11H15V17H5ZM5 19H15V25H5ZM5 27H15V33H5Z" fill="#4f9fc4" stroke={DARK} />
          <path d="M19 14H35M19 22H35M19 30H35" stroke="#222" strokeWidth="2" />
        </Svg>
      </div>
      <div className={cls}>
        <Svg s={38}>
          <circle cx="20" cy="21" r="16" fill="url(#b)" />
          <path d="M6 14C12 2 28 2 32 10L38 4V18H24L29 13C24 8 14 8 10 16Z" fill="#fff" stroke="#555" />
          <path d="M34 26C28 38 12 38 8 30L2 36V22H16L11 27C16 32 26 32 30 24Z" fill="#fff" stroke="#555" />
        </Svg>
      </div>
    </div>
  )
}

function BottomTabs() {
  return (
    <div className="flex h-[20px] shrink-0 border-t border-[#8f8f8f] bg-[#f5f5f5] whitespace-nowrap">
      <div className="ml-[2px] flex h-full w-[81px] border-t border-[#555]">
        {['M3 3H5V15H3ZM15 3V15L7 9Z', 'M13 3V15L5 9Z', 'M5 3V15L13 9Z', 'M3 3V15L11 9ZM13 3H15V15H13Z'].map((d) => (
          <div key={d} className="flex flex-1 items-center justify-center border-r border-[#7f7f90] bg-[#a4a4b6]">
            <svg width="18" height="18" viewBox="0 0 18 18">
              <path d={d} fill="#8e8ea2" />
            </svg>
          </div>
        ))}
      </div>
      <div className="ml-[15px] w-[70px] text-[15px] leading-[18px] font-bold">Modelo</div>
      <div className="flex w-[144px] items-center border-x border-[#a0a0a0] bg-[#d0d0d0] pl-[14px] text-[15px] leading-[18px] text-[#333]">Motion Study 1</div>
    </div>
  )
}

function Funnel({ x = 36, y = 24 }: { x?: number; y?: number }) {
  return (
    <path
      transform={`translate(${x} ${y})`}
      d="M-8 0H8L2.500 7V17H-2.500V7Z"
      fill="url(#p)"
      stroke="#7a4590"
      strokeWidth="1"
    />
  )
}

const filterIcons: ReactNode[] = [
  <circle key="a" cx="16" cy="15" r="5" fill="#4f9fc4" stroke={DARK} />,
  <path key="b" d="M15 5V38" stroke="#2f7fa3" strokeWidth="2.500" />,
  <path key="c" d="M8 4H30V32H8Z" fill="url(#b)" stroke={DARK} />,
  <path key="d" d="M4 22C8 14 14 18 20 10C24 4 28 4 34 14L30 30L20 24L12 36Z" fill="url(#b)" stroke={DARK} />,
  <>
    <path d="M6 12L16 4L30 10V30L20 38L6 30Z" fill="url(#b)" stroke="#222" />
    <path d="M6 12L20 18V38M20 18L30 10" fill="none" stroke="#222" />
  </>,
  <path key="f" d="M6 36L30 6" stroke="#2f7fa3" strokeWidth="2.500" strokeDasharray="10 3 3 3" />,
  <>
    <path d="M8 14L28 8V30L8 36Z" fill="url(#b)" stroke={DARK} />
    <path d="M18 3V40" stroke="#222" strokeDasharray="5 2" />
  </>,
  <rect key="h" x="12" y="8" width="13" height="15" fill="url(#b)" stroke={DARK} />,
  <>
    <path d="M4 6H36V36H4Z" fill="#f4f4f4" stroke="#c4c4c4" />
    <path d="M9 6V30C9 33 12 36 15 36H34M4 14H36M4 22H36M16 6V36M24 6V36" fill="none" stroke="#c4c4c4" />
    <path d="M4 6H30V9H7V28C7 32 10 35 14 35H34V38H12C7 38 4 34 4 28Z" fill="#2f7fa3" />
  </>,
  <>
    <path d="M9 8H30" stroke="#2f7fa3" strokeWidth="3" />
    <path d="M9 8V36" stroke="#333" strokeWidth="2" />
    <rect x="6" y="5" width="5" height="5" fill="#fff" stroke="#222" />
    <rect x="28" y="5" width="5" height="5" fill="#fff" stroke="#222" />
    <rect x="7" y="33" width="4" height="4" fill="#fff" stroke="#222" />
  </>,
  <>
    <path d="M6 36L30 6" stroke="#2f7fa3" strokeWidth="2.500" />
    <rect x="14" y="18" width="6" height="6" fill="#fff" stroke="#222" />
  </>,
  <>
    <circle cx="20" cy="22" r="12" fill="none" stroke="#222" strokeWidth="2" />
    <path d="M20 6V38M4 22H36" stroke="#2f7fa3" strokeWidth="2" strokeDasharray="6 2" />
  </>,
  <>
    <path d="M8 6H34V36H8Z" fill="#f4f4f4" stroke="#555" />
    <path d="M8 6H18V36H8Z" fill="#dcdcdc" stroke="#555" />
    <path d="M4 21H36" stroke="#2f7fa3" strokeWidth="2" strokeDasharray="4 2" />
  </>,
  <path key="n" d="M20 6L34 22L20 38L6 22ZM18 8L26 4L30 10M16 36L10 32" fill="none" stroke="#2f7fa3" strokeWidth="2" />,
  <path key="o" d="M8 22L18 42L24 8H36M12 26H22L17 38Z" fill="none" stroke="#222" strokeWidth="1.600" />,
  <>
    <rect x="4" y="6" width="34" height="22" fill="#fafafa" stroke="#222" strokeWidth="1.500" />
    <path d="M4 6H38V9H4Z" fill="#222" />
    <path d="M8 20C8 12 16 12 16 20Z" fill="none" stroke="#222" />
    <text x="28" y="23" textAnchor="middle" fontFamily="Liberation Sans" fontSize="13" fill="#222">03</text>
  </>,
  <>
    <circle cx="21" cy="16" r="12" fill="#efefef" stroke="#222" />
    <text x="21" y="21" textAnchor="middle" fontFamily="Liberation Sans" fontSize="14" fill="#222">N</text>
    <path d="M13 25L3 38" stroke="#222" strokeWidth="2" />
  </>,
  <>
    <rect x="8" y="4" width="22" height="26" fill="#f4f4f4" stroke="#333" />
    <text x="19" y="24" textAnchor="middle" fontFamily="Liberation Sans" fontSize="20" fill="#222">A</text>
    <path d="M15 30H23L26 40H12Z" fill="#222" />
  </>,
  <path key="s" d="M4 36L12 12H36M20 12L26 26L36 8" fill="none" stroke="#222" strokeWidth="2" />,
  <>
    <path d="M10 4V22H26Z" fill="url(#b)" stroke="#222" />
    <path d="M6 26H28M8 30C16 32 16 38 12 42M14 30C22 32 22 38 18 42M20 30C28 32 28 38 24 42" fill="none" stroke="#333" />
  </>,
  <>
    <circle cx="22" cy="18" r="13" fill="#efefef" stroke="#222" />
    <path d="M9 14H35" stroke="#222" strokeWidth="2" />
    <text x="22" y="28" textAnchor="middle" fontFamily="Liberation Sans" fontSize="11" fill="#222">A</text>
    <path d="M12 28L4 38" stroke="#222" strokeWidth="2" />
  </>,
  <>
    <path d="M14 4H30V30L22 40L14 30Z" fill="#f0f0f0" stroke="#555" />
    <path d="M8 4V32M36 4V32" stroke="#555" strokeDasharray="3 2" fill="none" />
  </>,
  <>
    <rect x="5" y="4" width="30" height="34" fill="#f4f4f4" stroke="#333" />
    <text x="15" y="30" textAnchor="middle" fontFamily="Liberation Sans" fontSize="24" fill="#222">A</text>
    <circle cx="28" cy="11" r="3" fill="none" stroke="#333" />
  </>,
  <>
    <path d="M22 6V22H6A16 16 0 0 1 22 6Z" fill="#fff" stroke="#222" />
    <path d="M22 6A16 16 0 0 1 38 22H22Z" fill="#222" />
    <path d="M22 22H6A16 16 0 0 0 22 38Z" fill="#222" />
    <path d="M22 22H38A16 16 0 0 1 22 38Z" fill="#fff" stroke="#222" />
  </>,
  <>
    <path d="M4 16H24" stroke="#222" strokeWidth="3" />
    <rect x="24" y="8" width="10" height="16" fill="url(#b)" stroke="#222" />
  </>,
  <>
    <path d="M6 16H34" stroke="#222" strokeWidth="3" />
    <rect x="15" y="8" width="10" height="16" fill="url(#b)" stroke="#222" />
  </>,
  <>
    <rect x="2" y="2" width="26" height="34" fill="url(#b)" stroke={DARK} />
    <path d="M24 18L34 4L40 18V30L28 36Z" fill="#fafafa" stroke="#222" />
  </>,
  <>
    <path d="M17 6V40" stroke="#2f7fa3" strokeWidth="2" />
    <path d="M26 18L34 4L42 18L34 24Z" fill="#fafafa" stroke="#222" />
  </>,
  <>
    <circle cx="18" cy="14" r="4" fill="#4f9fc4" stroke={DARK} />
    <path d="M26 18L34 4L42 18L34 24Z" fill="#fafafa" stroke="#222" />
  </>,
]

function FilterToolbar() {
  return (
    <div className="flex h-[53px] shrink-0 items-center border-b border-[#a0a0a0] bg-[#f5f5f5]">
      <div className="ml-[4px] h-[44px] w-[2px] shrink-0 border-l-2 border-dotted border-[#999]" />
      <div className="ml-[19px]">
        <Svg w={26} h={36} vb="0 0 26 36">
          <path d="M1 2H25L16 16V34H10V16Z" fill="#ececec" stroke="#cfcfcf" />
        </Svg>
      </div>
      <div className="ml-[19px]">
        <Svg w={27} h={36} vb="0 0 27 36">
          <path d="M1 1H13L9 8V14H6V8ZM7 8H19L15 15V21H12V15ZM14 15H26L22 22V34H18V22Z" fill="#f4f4f4" stroke="#cfcfcf" />
        </Svg>
      </div>
      <div className="ml-[21px]">
        <Svg w={27} h={36} vb="0 0 27 36">
          <path d="M1 1H13L9 8V14H6V8Z" fill="url(#p)" stroke="#6b3580" />
          <path d="M7 8H19L15 15V21H12V15Z" fill="url(#p)" stroke="#6b3580" />
          <path d="M14 15H26L22 22V34H18V22Z" fill="url(#p)" stroke="#6b3580" />
        </Svg>
      </div>
      <div className="ml-[10px] flex h-[46px] w-[66px] shrink-0 items-center border border-[#a0a0a0]">
        <div className="flex h-full w-[46px] items-center justify-center bg-[#acacac]">
          <Svg w={24} h={40} vb="0 0 24 40">
            <path d="M2 2V30L9 24L15 38L21 35L15 22L23 21Z" fill="url(#w)" stroke="#333" />
          </Svg>
        </div>
        <div className="ml-[5px]">
          <Caret />
        </div>
      </div>
      <div className="ml-[5px]">
        <Svg w={36} h={40} vb="0 0 36 40">
          <path d="M14 4V30L20 26L26 38L32 35L26 22L36 21Z" fill="#c8c8c8" />
          <path d="M2 2V30L9 24L15 38L21 35L15 22L23 21Z" fill="#f0f0f0" stroke="#c4c4c4" />
        </Svg>
      </div>
      <div className="ml-[8px] h-[46px] w-px shrink-0 bg-[#a8a8a8]" />
      {filterIcons.map((icon, i) => (
        <div key={i} className="w-[47.200px] shrink-0">
          <Svg w={47} h={44} vb="0 0 47 44">
            {icon}
            <Funnel />
          </Svg>
        </div>
      ))}
      <div className="-ml-[1px] h-[52px] w-px shrink-0 bg-[#888]" />
    </div>
  )
}

function StatusBar() {
  return (
    <div className="flex h-[20px] shrink-0 items-center bg-[#f5f5f5] pt-[2px] text-[14px] leading-none whitespace-nowrap">
      <div className="ml-[1px] w-[1542px]">SOLIDWORKS Premium 2019 SP1.0</div>
      <div className="flex h-full w-[111px] items-center border-x border-[#dcdcdc] pl-[5px]">Editando Pieza</div>
      <div className="ml-[79px] w-[99px]">MMGS</div>
      <svg width="7" height="4" viewBox="0 0 7 4">
        <path d="M0 4H7L3.500 0Z" fill="#333" />
      </svg>
      <div className="ml-[69px]">
        <Svg s={16} vb="0 0 16 16">
          <path d="M2 6L8 1L14 8L8 15L3 12Z" fill="#eee" stroke="#555" />
          <path d="M5 7L10 11" stroke="#555" />
        </Svg>
      </div>
    </div>
  )
}

export default function App() {
  return (
    <div className="flex h-[1029px] w-[1919px] flex-col overflow-hidden bg-white font-['Noto_Sans',sans-serif] text-[#222]">
      <Defs />
      <TopBar />
      <Ribbon />
      <div className="relative flex min-h-0 flex-1 flex-col">
        <CommandTabs />
        <div className="flex min-h-0 flex-1">
          <FeatureTree />
          <div className="relative flex-1 bg-white">
            <PartView />
            <TaskPane />
          </div>
        </div>
        <CanvasToolbar />
      </div>
      <BottomTabs />
      <FilterToolbar />
      <StatusBar />
    </div>
  )
}
